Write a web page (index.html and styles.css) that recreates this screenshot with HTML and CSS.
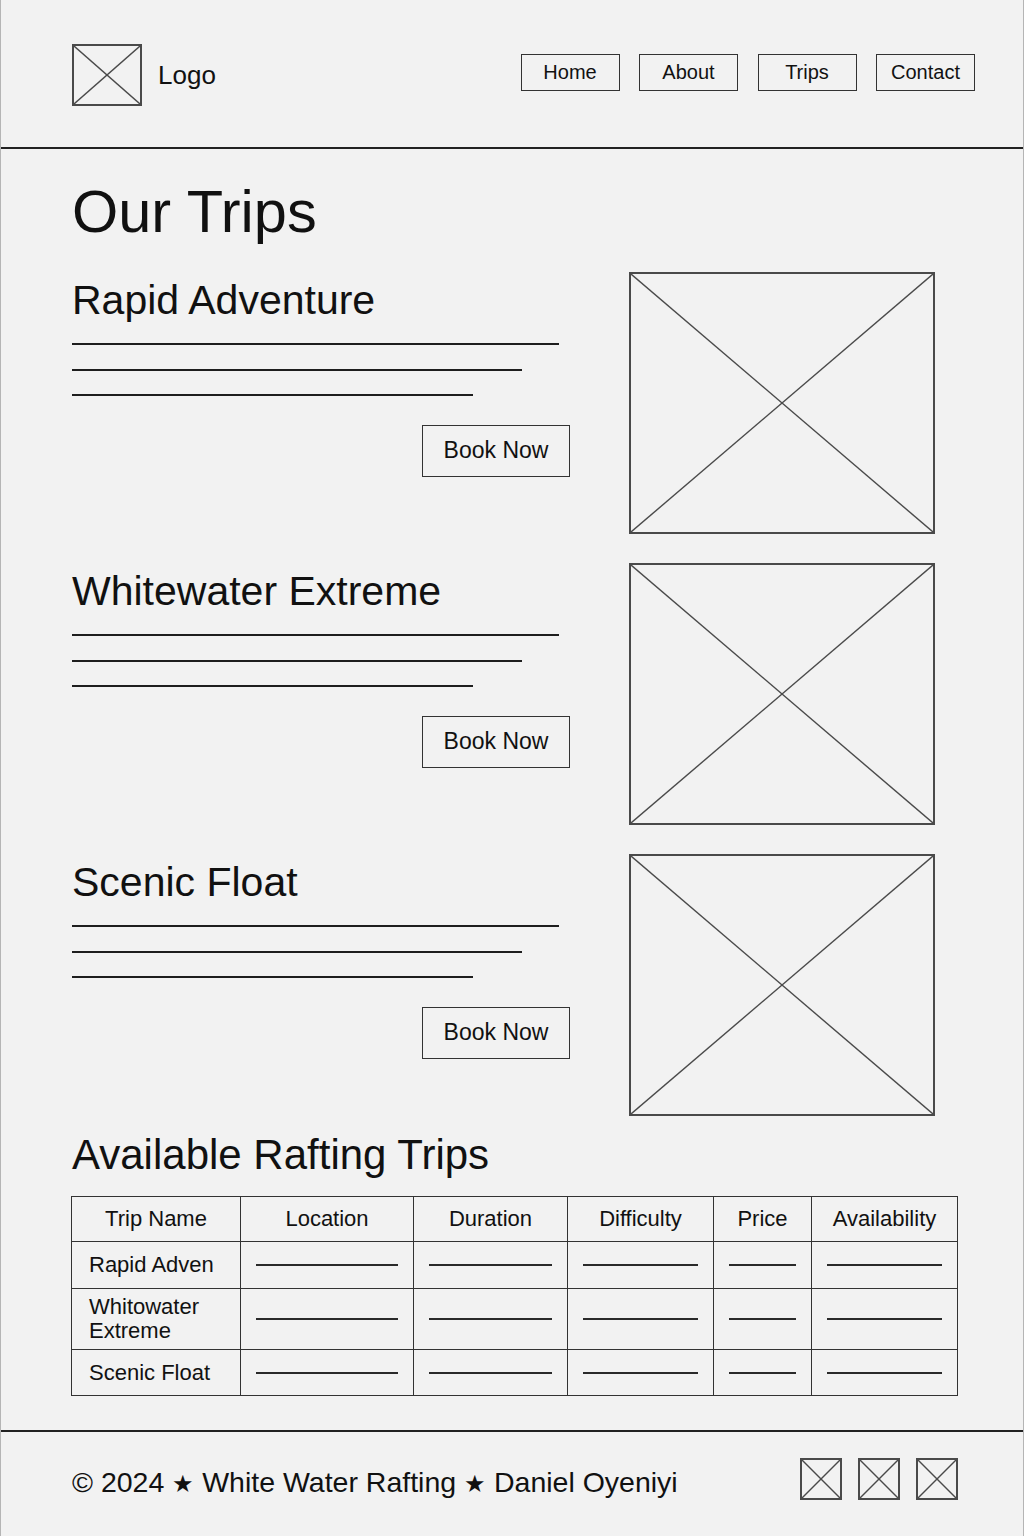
FILE: index.html
```html
<!DOCTYPE html>
<html lang="en">
<head>
<meta charset="utf-8">
<title>Our Trips – White Water Rafting</title>
<link rel="stylesheet" href="styles.css">
</head>
<body>
<div class="page">
  <header class="site-header">
    <div class="brand">
      <div class="ph ph-logo">
        <svg viewBox="0 0 100 100" preserveAspectRatio="none"><line x1="0" y1="0" x2="100" y2="100"/><line x1="100" y1="0" x2="0" y2="100"/></svg>
      </div>
      <span class="brand-name">Logo</span>
    </div>
    <nav class="nav">
      <a class="nav-btn" href="#">Home</a>
      <a class="nav-btn" href="#">About</a>
      <a class="nav-btn" href="#">Trips</a>
      <a class="nav-btn" href="#">Contact</a>
    </nav>
  </header>

  <main class="content">
    <h1 class="page-title">Our Trips</h1>

    <section class="trips">
      <article class="trip">
        <div class="trip-text">
          <h2 class="trip-title">Rapid Adventure</h2>
          <div class="text-lines"><span class="tl tl-1"></span><span class="tl tl-2"></span><span class="tl tl-3"></span></div>
          <div class="trip-actions"><a class="book-btn" href="#">Book Now</a></div>
        </div>
        <div class="ph ph-image">
          <svg viewBox="0 0 100 100" preserveAspectRatio="none"><line x1="0" y1="0" x2="100" y2="100"/><line x1="100" y1="0" x2="0" y2="100"/></svg>
        </div>
      </article>

      <article class="trip">
        <div class="trip-text">
          <h2 class="trip-title">Whitewater Extreme</h2>
          <div class="text-lines"><span class="tl tl-1"></span><span class="tl tl-2"></span><span class="tl tl-3"></span></div>
          <div class="trip-actions"><a class="book-btn" href="#">Book Now</a></div>
        </div>
        <div class="ph ph-image">
          <svg viewBox="0 0 100 100" preserveAspectRatio="none"><line x1="0" y1="0" x2="100" y2="100"/><line x1="100" y1="0" x2="0" y2="100"/></svg>
        </div>
      </article>

      <article class="trip">
        <div class="trip-text">
          <h2 class="trip-title">Scenic Float</h2>
          <div class="text-lines"><span class="tl tl-1"></span><span class="tl tl-2"></span><span class="tl tl-3"></span></div>
          <div class="trip-actions"><a class="book-btn" href="#">Book Now</a></div>
        </div>
        <div class="ph ph-image">
          <svg viewBox="0 0 100 100" preserveAspectRatio="none"><line x1="0" y1="0" x2="100" y2="100"/><line x1="100" y1="0" x2="0" y2="100"/></svg>
        </div>
      </article>
    </section>

    <section class="table-section">
      <h2 class="section-title">Available Rafting Trips</h2>
      <table class="trip-table">
        <colgroup>
          <col class="c-name"><col class="c-loc"><col class="c-dur"><col class="c-diff"><col class="c-price"><col class="c-avail">
        </colgroup>
        <thead>
          <tr class="row-head">
            <th>Trip Name</th><th>Location</th><th>Duration</th><th>Difficulty</th><th>Price</th><th>Availability</th>
          </tr>
        </thead>
        <tbody>
          <tr class="row-1">
            <td class="name">Rapid Adven</td>
            <td><span class="cell-line"></span></td><td><span class="cell-line"></span></td><td><span class="cell-line"></span></td><td><span class="cell-line"></span></td><td><span class="cell-line"></span></td>
          </tr>
          <tr class="row-2">
            <td class="name">Whitowater Extreme</td>
            <td><span class="cell-line"></span></td><td><span class="cell-line"></span></td><td><span class="cell-line"></span></td><td><span class="cell-line"></span></td><td><span class="cell-line"></span></td>
          </tr>
          <tr class="row-3">
            <td class="name">Scenic Float</td>
            <td><span class="cell-line"></span></td><td><span class="cell-line"></span></td><td><span class="cell-line"></span></td><td><span class="cell-line"></span></td><td><span class="cell-line"></span></td>
          </tr>
        </tbody>
      </table>
    </section>
  </main>

  <footer class="site-footer">
    <p class="copyright">© 2024 <span class="star">★</span> White Water Rafting <span class="star">★</span> Daniel Oyeniyi</p>
    <div class="socials">
      <div class="ph ph-social"><svg viewBox="0 0 100 100" preserveAspectRatio="none"><line x1="0" y1="0" x2="100" y2="100"/><line x1="100" y1="0" x2="0" y2="100"/></svg></div>
      <div class="ph ph-social"><svg viewBox="0 0 100 100" preserveAspectRatio="none"><line x1="0" y1="0" x2="100" y2="100"/><line x1="100" y1="0" x2="0" y2="100"/></svg></div>
      <div class="ph ph-social"><svg viewBox="0 0 100 100" preserveAspectRatio="none"><line x1="0" y1="0" x2="100" y2="100"/><line x1="100" y1="0" x2="0" y2="100"/></svg></div>
    </div>
  </footer>
</div>
</body>
</html>
```

FILE: styles.css
```css
* { box-sizing: border-box; }

html, body {
  margin: 0;
  padding: 0;
  background: #f2f2f2;
}

body {
  font-family: "Liberation Sans", Arial, sans-serif;
  color: #111;
}

.page {
  width: 1024px;
  min-height: 1536px;
  display: flex;
  flex-direction: column;
  border-left: 1px solid #b5b5b5;
  border-right: 1px solid #b5b5b5;
  background: #f2f2f2;
}

/* placeholders */
.ph {
  border: 2px solid #4a4a4a;
  flex: none;
}
.ph svg {
  display: block;
  width: 100%;
  height: 100%;
}
.ph line {
  stroke: #4a4a4a;
  stroke-width: 1.4;
  vector-effect: non-scaling-stroke;
}

/* header */
.site-header {
  height: 149px;
  padding: 0 48px 0 71px;
  display: flex;
  align-items: center;
  justify-content: space-between;
  border-bottom: 2px solid #222;
}

.brand {
  display: flex;
  align-items: center;
  gap: 16px;
  margin-top: 3px;
}

.ph-logo {
  width: 70px;
  height: 62px;
}

.brand-name {
  font-size: 26px;
}

.nav {
  display: flex;
  gap: 19.5px;
  margin-top: -3px;
}

.nav-btn {
  display: block;
  min-width: 99px;
  height: 37px;
  padding: 0 14px;
  border: 1.5px solid #333;
  font-size: 20px;
  line-height: 34px;
  text-align: center;
  color: #111;
  text-decoration: none;
}

/* content */
.content {
  flex: 1;
  padding: 0 0 0 71px;
}

.page-title {
  margin: 28px 0 0;
  font-size: 59.5px;
  line-height: 70px;
  font-weight: 400;
}

.trips {
  margin-top: 25px;
  display: flex;
  flex-direction: column;
  gap: 29px;
}

.trip {
  display: grid;
  grid-template-columns: 498px 306px;
  column-gap: 59px;
  align-items: start;
}

.trip-text {
  padding-top: 4px;
}

.trip-title {
  margin: 0;
  font-size: 41px;
  line-height: 48px;
  font-weight: 400;
}

.text-lines {
  margin-top: 19px;
  display: flex;
  flex-direction: column;
  gap: 23.5px;
}

.tl {
  display: block;
  height: 2px;
  background: #1e1e1e;
}
.tl-1 { width: 487px; }
.tl-2 { width: 450px; }
.tl-3 { width: 401px; }

.trip-actions {
  margin-top: 29px;
  display: flex;
  justify-content: flex-end;
}

.book-btn {
  display: block;
  width: 148px;
  height: 52px;
  border: 1.5px solid #333;
  font-size: 23px;
  line-height: 49px;
  text-align: center;
  color: #111;
  text-decoration: none;
}

.ph-image {
  width: 306px;
  height: 262px;
}

/* table */
.table-section {
  margin-top: 15px;
}

.section-title {
  margin: 0 0 17px;
  font-size: 42px;
  line-height: 48px;
  font-weight: 400;
}

.trip-table {
  margin-left: -1px;
  width: 886px;
  border-collapse: collapse;
  table-layout: fixed;
  font-size: 22px;
}

.c-name { width: 169px; }
.c-loc { width: 173px; }
.c-dur { width: 154px; }
.c-diff { width: 146px; }
.c-price { width: 98px; }
.c-avail { width: 146px; }

.trip-table th,
.trip-table td {
  border: 1.5px solid #333;
  padding: 0 15px;
  line-height: 24px;
  vertical-align: middle;
}

.trip-table th {
  font-weight: 400;
  text-align: center;
  white-space: nowrap;
  padding: 0 4px;
}

.trip-table td.name {
  padding: 0 10px 0 17px;
}

.row-head { height: 45px; }
.row-1 { height: 47px; }
.row-2 { height: 61px; }
.row-3 { height: 46px; }

.cell-line {
  display: block;
  height: 2px;
  background: #2a2a2a;
}

/* footer */
.site-footer {
  height: 106px;
  border-top: 2px solid #222;
  padding: 26px 65px 0 71px;
  display: flex;
  justify-content: space-between;
  align-items: flex-start;
}

.copyright {
  margin: 0;
  font-size: 28.5px;
  line-height: 42px;
  padding-top: 3px;
}

.star {
  font-size: 0.85em;
}

.socials {
  display: flex;
  gap: 16px;
}

.ph-social {
  width: 42px;
  height: 42px;
}
```
